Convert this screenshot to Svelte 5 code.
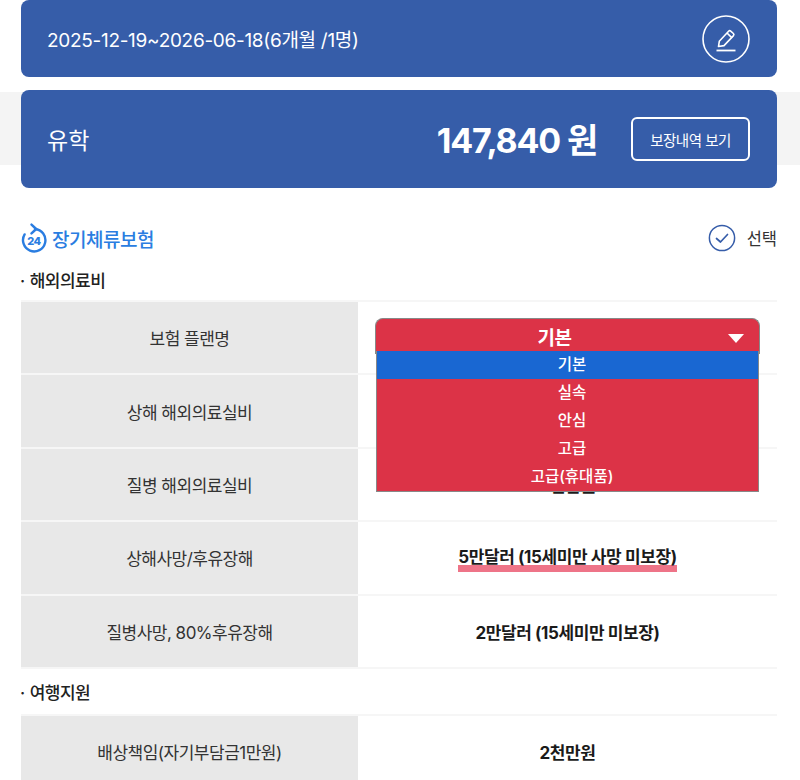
<script>
  let plans = ['기본', '실속', '안심', '고급', '고급(휴대품)'];
  let selected = '기본';

  let medical = [
    { label: '상해 해외의료실비', value: '1천만원' },
    { label: '질병 해외의료실비', value: '2천만원' },
    { label: '상해사망/후유장해', value: '5만달러 (15세미만 사망 미보장)', mark: true },
    { label: '질병사망, 80%후유장해', value: '2만달러 (15세미만 미보장)' }
  ];
</script>

<div class="page">
  <div class="card period">
    <span>2025-12-19~2026-06-18(6개월 /1명)</span>
    <button class="edit" aria-label="수정">
      <svg width="48" height="48" viewBox="0 0 48 48" fill="none" stroke="#fff">
        <circle cx="24" cy="24" r="23" stroke-width="1.6" />
        <path d="M16.5 31.5 L17.3 26.3 L26.6 16.2 Q27.6 15.2 28.7 16.1 L31.4 18.5 Q32.4 19.5 31.5 20.6 L22 30.6 Z" stroke-width="1.6" stroke-linejoin="round" />
        <path d="M25 18 L30 22.8" stroke-width="1.6" />
        <path d="M14.5 35.5 H33.5" stroke-width="1.8" />
      </svg>
    </button>
  </div>

  <div class="band">
    <div class="card summary">
      <span class="who">유학</span>
      <strong class="price">147,840 원</strong>
      <button class="detail">보장내역 보기</button>
    </div>
  </div>

  <div class="plan-head">
    <h2>
      <svg width="26" height="30" viewBox="0 0 26 30" fill="none" stroke="#2a7de1">
        <path d="M14 6 A11.2 11.2 0 1 1 3.6 11.4" stroke-width="2.4" stroke-linecap="round" />
        <path d="M10.5 1.6 L15.2 6 L10.5 10.4" stroke-width="2.4" stroke-linecap="round" stroke-linejoin="round" />
        <text x="13" y="21.5" text-anchor="middle" class="num">24</text>
      </svg>
      장기체류보험
    </h2>
    <div class="pick">
      <svg width="28" height="28" viewBox="0 0 28 28" fill="none" stroke="#365da9">
        <circle cx="14" cy="14" r="12.6" stroke-width="1.5" />
        <path d="M8.5 14.5 L12.5 18 L19.5 10.5" stroke-width="1.7" stroke-linecap="round" stroke-linejoin="round" />
      </svg>
      <span>선택</span>
    </div>
  </div>

  <h3>· 해외의료비</h3>
  <div class="table">
    <div class="row">
      <div class="label">보험 플랜명</div>
      <div class="value select-cell">
        <div class="select">
          <span>{selected}</span>
          <i class="arrow"></i>
        </div>
        <ul class="options">
          {#each plans as plan}
            <li class:active={plan === selected}>{plan}</li>
          {/each}
        </ul>
      </div>
    </div>
    {#each medical as row}
      <div class="row">
        <div class="label">{row.label}</div>
        <div class="value">
          <b class:mark={row.mark}>{row.value}</b>
        </div>
      </div>
    {/each}
  </div>

  <h3 class="second">· 여행지원</h3>
  <div class="table">
    <div class="row">
      <div class="label">배상책임(자기부담금1만원)</div>
      <div class="value"><b>2천만원</b></div>
    </div>
  </div>
</div>

<style>
  :global(body) {
    margin: 0;
    background: #fff;
    font-family: Inter, "Noto Sans CJK KR", sans-serif;
    color: #222;
    overflow: hidden;
  }

  .page {
    height: 780px;
    overflow: hidden;
  }

  .card {
    margin: 0 23px 0 21px;
    background: #365da9;
    border-radius: 8px;
    color: #fff;
    display: flex;
    align-items: center;
    padding: 0 27px 0 26px;
  }

  .period {
    height: 77px;
    justify-content: space-between;
    font-size: 19px;
    letter-spacing: -0.3px;
  }

  .period span {
    margin-top: -1px;
  }

  .edit {
    padding: 0;
    border: 0;
    background: none;
    display: flex;
    margin-top: 1px;
  }

  .band {
    margin-top: 13px;
    background: linear-gradient(#fff 2px, #f4f4f4 2px, #f4f4f4 75px, #fff 75px);
  }

  .summary {
    height: 98px;
  }

  .who {
    font-size: 23px;
    flex: 1;
  }

  .price {
    font-size: 34px;
    font-weight: 700;
    letter-spacing: -1.2px;
    margin-top: -2px;
  }

  .detail {
    margin-left: 34px;
    width: 119px;
    height: 44px;
    padding: 0;
    border: 2px solid #fff;
    border-radius: 6px;
    background: none;
    color: #fff;
    font: inherit;
    font-size: 14.5px;
    letter-spacing: -0.5px;
  }

  .plan-head {
    margin: 35px 23px 0 21px;
    height: 30px;
    display: flex;
    align-items: center;
    justify-content: space-between;
  }

  h2 {
    margin: 0;
    display: flex;
    align-items: center;
    gap: 5px;
    font-size: 19px;
    font-weight: 500;
    color: #2a7de1;
    letter-spacing: -0.5px;
  }

  .num {
    font-size: 11px;
    font-weight: 800;
    fill: #2a7de1;
    stroke: none;
  }

  .pick {
    display: flex;
    align-items: center;
    gap: 11px;
    font-size: 16.5px;
    color: #333;
  }

  h3 {
    margin: 15px 23px 0 20px;
    height: 32px;
    font-size: 17px;
    line-height: 26px;
    font-weight: 500;
    letter-spacing: -0.5px;
    word-spacing: 1px;
  }

  h3.second {
    margin-top: 10px;
    height: 35px;
    line-height: 28px;
  }

  .table {
    margin: 0 23px 0 21px;
    border-top: 2px solid #f6f6f6;
  }

  .row {
    display: grid;
    grid-template-columns: 337px 1fr;
    height: 71.4px;
    border-bottom: 2px solid #f6f6f6;
  }

  .label,
  .value {
    display: flex;
    align-items: center;
    justify-content: center;
    font-size: 17px;
    letter-spacing: -0.5px;
  }

  .label {
    background: #e8e8e8;
    color: #333;
  }

  .value b {
    font-weight: 700;
    color: #1a1a1a;
    letter-spacing: -0.4px;
  }

  .mark {
    line-height: 30px;
    box-shadow: inset 0 -7px 0 #ee7488;
    margin-top: -2px;
  }

  .select-cell {
    position: relative;
    align-items: flex-start;
    padding: 16px 17px 0;
  }

  .select {
    box-sizing: border-box;
    width: 100%;
    height: 36px;
    background: #dc3347;
    border: 1px solid #888;
    border-bottom: 0;
    border-radius: 8px 8px 0 0;
    color: #fff;
    font-size: 19px;
    font-weight: 700;
    display: flex;
    align-items: center;
    justify-content: center;
    position: relative;
    padding-right: 26px;
  }

  .arrow {
    position: absolute;
    right: 15px;
    top: 15px;
    border-style: solid;
    border-width: 9px 8px 0;
    border-color: #fff transparent transparent;
  }

  .options {
    position: absolute;
    left: 18px;
    right: 18px;
    top: 49px;
    z-index: 2;
    margin: 0;
    padding: 0;
    list-style: none;
    background: #dc3347;
    border: 1px solid #888;
    border-width: 0 1px 1px;
    color: #fff;
    font-size: 15.5px;
    font-weight: 500;
    letter-spacing: 0;
  }

  .options li {
    height: 28px;
    line-height: 28px;
    text-align: center;
    padding-left: 9px;
  }

  .options li.active {
    background: #1967d2;
  }
</style>
